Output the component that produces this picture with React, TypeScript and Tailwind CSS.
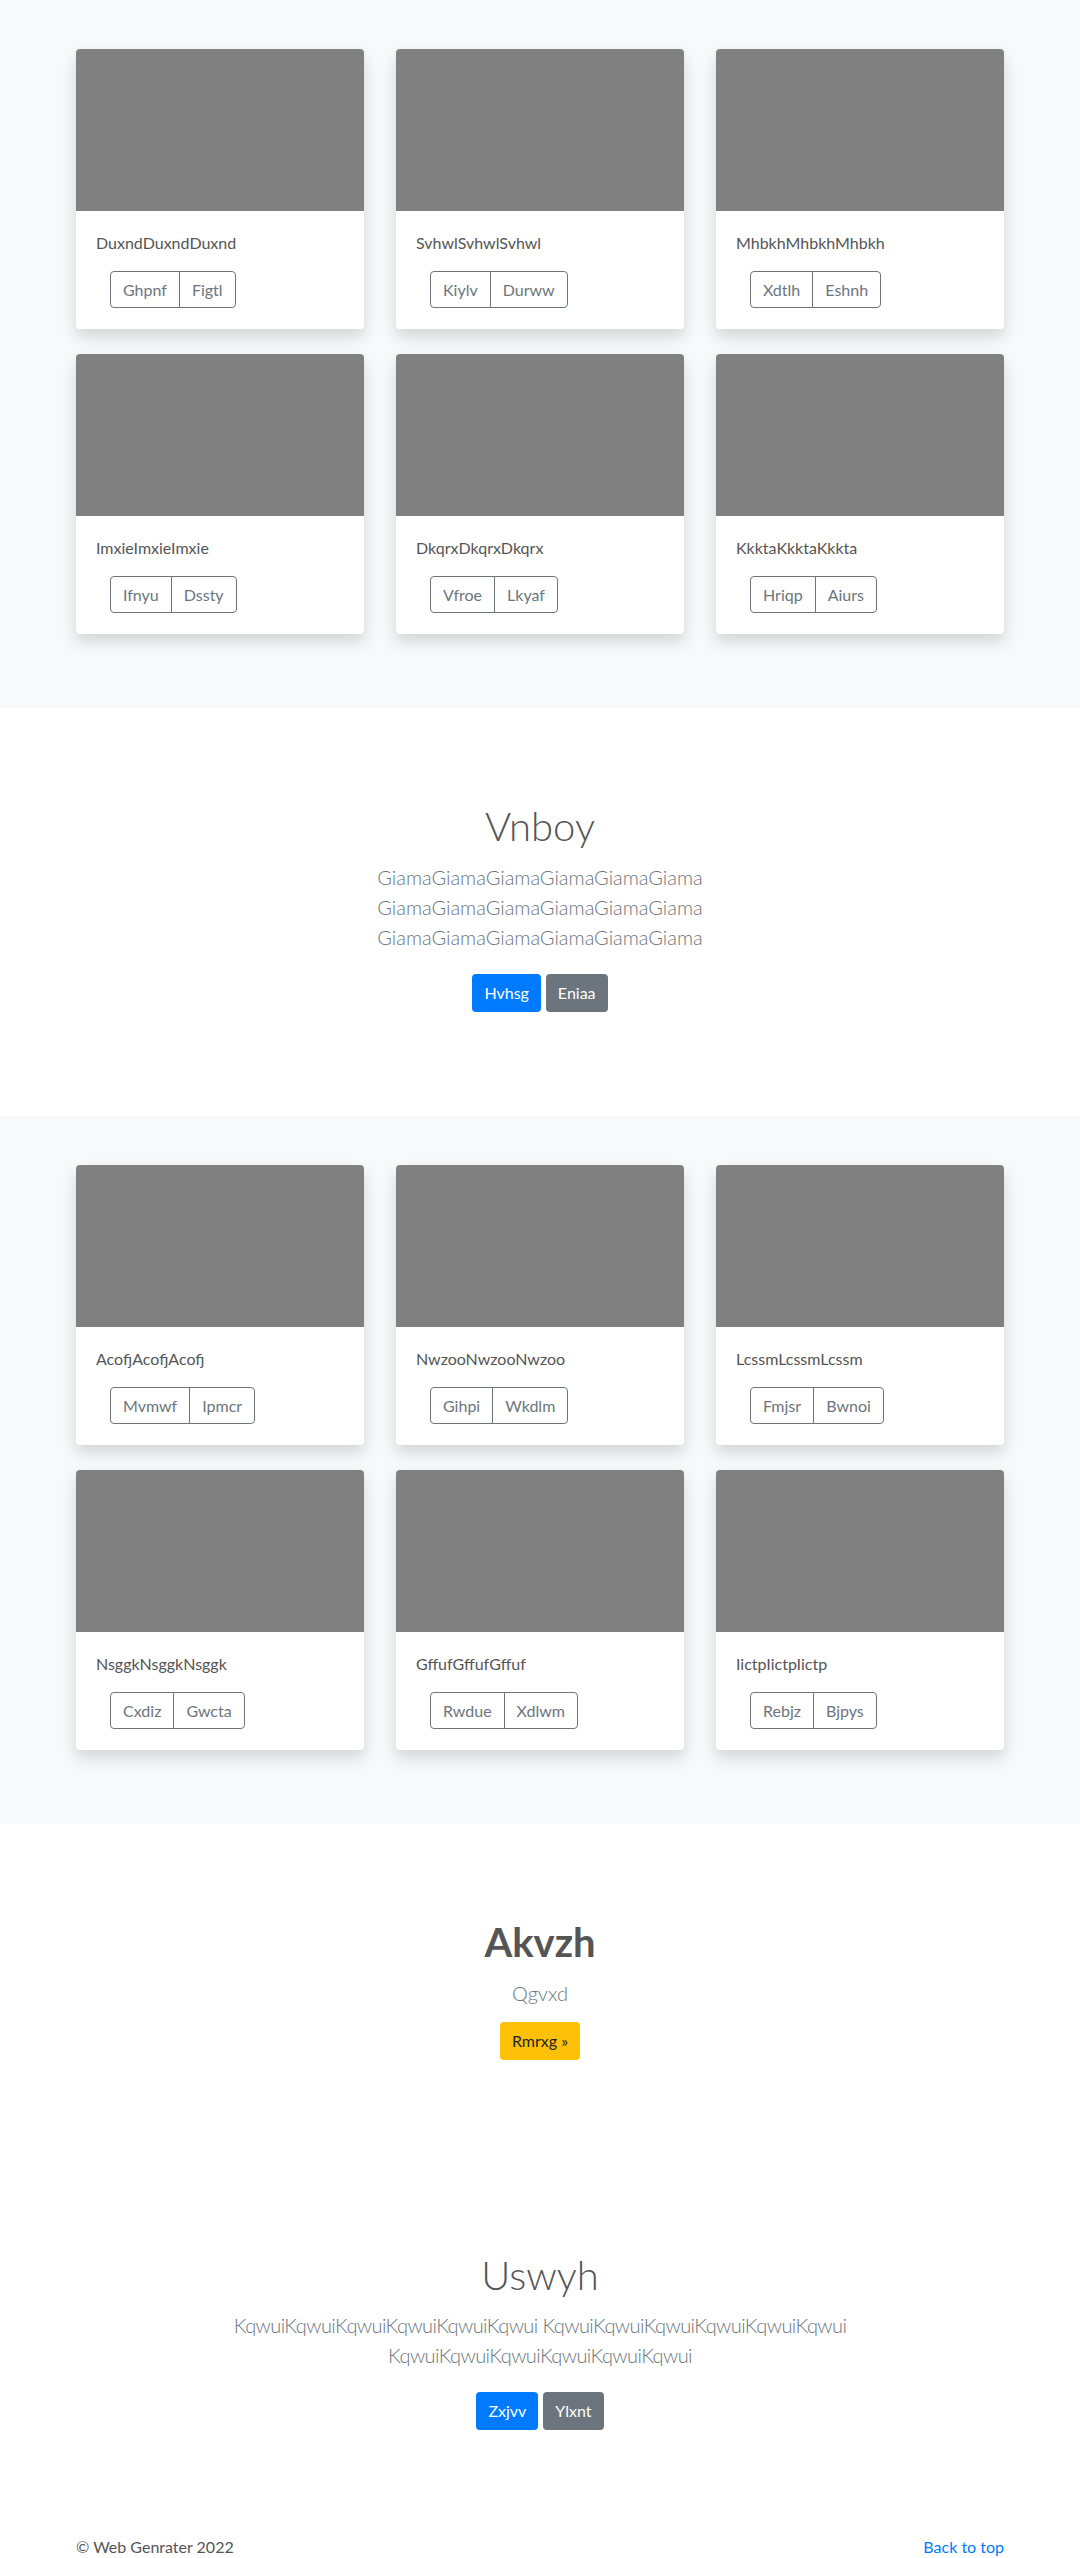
import React from 'react';

type CardData = { title: string; a: string; b: string };

const ROW_ONE: CardData[] = [
  { title: 'DuxndDuxndDuxnd', a: 'Ghpnf', b: 'Figtl' },
  { title: 'SvhwlSvhwlSvhwl', a: 'Kiylv', b: 'Durww' },
  { title: 'MhbkhMhbkhMhbkh', a: 'Xdtlh', b: 'Eshnh' },
  { title: 'ImxieImxieImxie', a: 'Ifnyu', b: 'Dssty' },
  { title: 'DkqrxDkqrxDkqrx', a: 'Vfroe', b: 'Lkyaf' },
  { title: 'KkktaKkktaKkkta', a: 'Hriqp', b: 'Aiurs' },
];

const ROW_TWO: CardData[] = [
  { title: 'AcofjAcofjAcofj', a: 'Mvmwf', b: 'Ipmcr' },
  { title: 'NwzooNwzooNwzoo', a: 'Gihpi', b: 'Wkdlm' },
  { title: 'LcssmLcssmLcssm', a: 'Fmjsr', b: 'Bwnoi' },
  { title: 'NsggkNsggkNsggk', a: 'Cxdiz', b: 'Gwcta' },
  { title: 'GffufGffufGffuf', a: 'Rwdue', b: 'Xdlwm' },
  { title: 'IictpIictpIictp', a: 'Rebjz', b: 'Bjpys' },
];

function Card({ title, a, b }: CardData) {
  return (
    <div className="h-[280px] bg-white rounded overflow-hidden shadow-[0_8px_16px_rgba(0,0,0,0.15)] flex flex-col">
      <div className="h-[162px] shrink-0 bg-[#808080]" />
      <div className="px-5 pt-5 flex flex-col items-start">
        <p className="h-6 text-base leading-6 text-[#555]">{title}</p>
        <div className="mt-4 ml-[14px] flex h-[37px]">
          <button className="border border-[#6c757d] text-[#6c757d] text-base leading-[23px] px-3 rounded-l">
            {a}
          </button>
          <button className="-ml-px border border-[#6c757d] text-[#6c757d] text-base leading-[23px] px-3 rounded-r">
            {b}
          </button>
        </div>
      </div>
    </div>
  );
}

function Album({ cards }: { cards: CardData[] }) {
  return (
    <section className="bg-[#f8f9fa] pt-[49px] pb-[74px]">
      <div className="w-[928px] mx-auto grid grid-cols-3 gap-x-8 gap-y-[25px]">
        {cards.map(c => (
          <Card key={c.title} {...c} />
        ))}
      </div>
    </section>
  );
}

function Buttons({ left, right }: { left: string; right: string }) {
  return (
    <div className="flex justify-center gap-[5px]">
      <button className="h-[38px] bg-[#007bff] text-white text-base leading-6 px-3 rounded">{left}</button>
      <button className="h-[38px] bg-[#6c757d] text-white text-base leading-6 px-3 rounded">{right}</button>
    </div>
  );
}

export default function App() {
  const giama = 'GiamaGiamaGiamaGiamaGiamaGiama';
  const kqwui = 'KqwuiKqwuiKqwuiKqwuiKqwuiKqwui';

  return (
    <div className="min-h-screen bg-white text-[#555]" style={{ fontFamily: 'Lato, "Open Sans", sans-serif' }}>
      <Album cards={ROW_ONE} />

      <section className="h-[408px] pt-[94px] text-center">
        <h1 className="h-12 text-[40px] leading-[48px] font-light text-[#555]">Vnboy</h1>
        <p className="mt-3 mx-auto max-w-[500px] text-[20px] leading-[30px] font-light text-[#6c757d]">
          {giama} {giama} {giama}
        </p>
        <div className="mt-[22px]">
          <Buttons left="Hvhsg" right="Eniaa" />
        </div>
      </section>

      <Album cards={ROW_TWO} />

      <section className="h-[427px] pt-[94px] text-center">
        <h2 className="h-12 text-[40px] leading-[48px] font-bold text-[#555]">Akvzh</h2>
        <p className="mt-3 text-[20px] leading-[30px] font-light text-[#6c757d]">Qgvxd</p>
        <div className="mt-[14px] flex justify-center">
          <button className="h-[38px] bg-[#ffc107] text-[#212529] text-base leading-6 px-3 rounded">Rmrxg »</button>
        </div>
      </section>

      <section className="h-[284px] text-center">
        <h2 className="h-12 text-[40px] leading-[48px] font-light text-[#555]">Uswyh</h2>
        <p className="mt-[11px] mx-auto max-w-[700px] text-[20px] leading-[30px] font-light tracking-[-0.6px] text-[#6c757d]">
          {kqwui} {kqwui} {kqwui}
        </p>
        <div className="mt-[22px]">
          <Buttons left="Zxjvv" right="Ylxnt" />
        </div>
      </section>

      <footer className="w-[928px] mx-auto flex justify-between pb-12 text-base leading-6">
        <p className="text-[#555]">© Web Genrater 2022</p>
        <a href="#" className="text-[#007bff]">Back to top</a>
      </footer>
    </div>
  );
}
